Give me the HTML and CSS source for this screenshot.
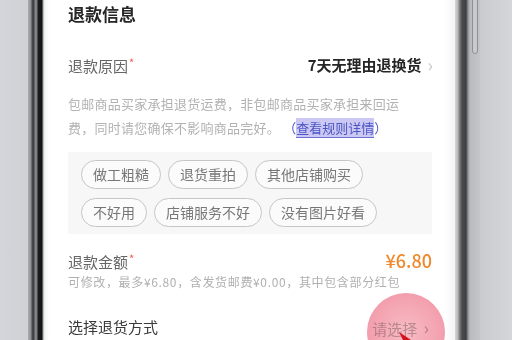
FILE: index.html
```html
<!DOCTYPE html>
<html lang="zh">
<head>
<meta charset="utf-8">
<link rel="stylesheet" href="styles.css">
</head>
<body>
<div class="scene">
  <div class="bg-left"></div>
  <div class="bezel-left"></div>
  <div class="screen">
    <div class="title">退款信息</div>
    <div class="row reason">
      <span class="label">退款原因<i class="req">*</i></span>
      <span class="value">7天无理由退换货<span class="chev">&#x203A;</span></span>
    </div>
    <p class="note">包邮商品买家承担退货运费，非包邮商品买家承担来回运<br>费，同时请您确保不影响商品完好。 <span class="link">（<u>查看规则详情</u>）</span></p>
    <div class="tags">
      <div class="tag-row">
        <span class="tag">做工粗糙</span>
        <span class="tag">退货重拍</span>
        <span class="tag">其他店铺购买</span>
      </div>
      <div class="tag-row">
        <span class="tag">不好用</span>
        <span class="tag">店铺服务不好</span>
        <span class="tag">没有图片好看</span>
      </div>
    </div>
    <div class="row amount">
      <span class="label">退款金额<i class="req">*</i></span>
      <span class="price">¥6.80</span>
    </div>
    <div class="sub">可修改，最多¥6.80，含发货邮费¥0.00，其中包含部分红包</div>
    <div class="row method">
      <span class="label dark">选择退货方式</span>
      <span class="pick">请选择 <span class="chev2">&#x203A;</span></span>
    </div>
    <div class="touch"></div>
    <svg class="pointer" width="30" height="14" viewBox="0 0 30 14"><polygon points="2,2 20,14 8,14" fill="#d8101e"/></svg>
  </div>
  <div class="bezel-right"><div class="button"></div></div>
  <div class="bg-right"></div>
</div>
</body>
</html>
```
FILE: styles.css
```css
* { box-sizing: border-box; }
html, body { margin: 0; padding: 0; }
body {
  width: 512px;
  height: 340px;
  overflow: hidden;
  font-family: "Noto Sans CJK SC", "Noto Sans", sans-serif;
  background: #d2d4d8;
}
.scene {
  display: flex;
  width: 512px;
  height: 340px;
}
.bg-left {
  width: 28px;
  background: linear-gradient(90deg, #d3d5da, #cfd1d5);
}
.bezel-left {
  width: 17px;
  background: linear-gradient(90deg,
    #a9abaf 0px, #8d8f93 3px, #4b4c4f 4px, #3a3b3d 6px, #8a8b8e 7px, #7a7b7e 9px,
    #1c1c1e 10px, #141415 14px, #9a9b9d 15px, #e6e6e6 16px, #f6f6f6 17px);
}
.screen {
  position: relative;
  width: 410px;
  padding: 0 23px;
  background: linear-gradient(90deg, #f4f4f4 0, #ffffff 4px, #ffffff 400px, #f2f2f2 410px);
  color: #333;
  overflow: hidden;
}
.bezel-right {
  position: relative;
  width: 25px;
  background: linear-gradient(90deg,
    #d8d8d8 0px, #b4b4b6 3px, #8a8a8c 4px, #4a4a4c 7px, #3e3e40 11px, #8e8f92 13px,
    #b9bbbe 15px, #c3c5c8 25px);
}
.button {
  position: absolute;
  left: 17px;
  top: -4px;
  width: 6px;
  height: 58px;
  border: 1px solid #8d8f92;
  border-radius: 3px;
  background: #c8cacd;
}
.bg-right {
  flex: 1;
  background: linear-gradient(90deg, #c9cbce, #d4d6da);
}
.title {
  margin-top: 2px;
  font-size: 17px;
  line-height: 24px;
  font-weight: 700;
  color: #262626;
}
.row {
  display: flex;
  justify-content: space-between;
  align-items: center;
  height: 24px;
}
.reason { margin-top: 26px; }
.label {
  font-size: 15px;
  color: #666;
  line-height: 24px;
}
.label.dark { color: #3a3a3a; }
.req {
  font-style: normal;
  color: #f05a4a;
  font-size: 11px;
  vertical-align: 5px;
  margin-left: 1px;
}
.value {
  font-size: 15px;
  font-weight: 700;
  color: #262626;
  display: flex;
  align-items: center;
}
.chev {
  font-weight: 400;
  color: #c8c8c8;
  font-size: 18px;
  margin-left: 6px;
  margin-right: -1px;
}
.note {
  margin: 16px 0 0;
  font-size: 13px;
  line-height: 24px;
  color: #b2b2b2;
  letter-spacing: 0.25px;
  white-space: nowrap;
}
.link { color: #4c55c4; letter-spacing: 0; }
.link u {
  text-decoration: none;
  background: #cbc8f3;
  border-bottom: 1px solid #6a6fd0;
}
.tags {
  margin-top: 12px;
  background: #f7f7f7;
  padding: 8px 13px 7px;
  display: flex;
  flex-direction: column;
  gap: 9px;
}
.tag-row {
  display: flex;
  gap: 7px;
}
.tag {
  height: 29px;
  line-height: 27px;
  padding: 0 11px;
  border: 1.5px solid #c6c6c6;
  border-radius: 15px;
  font-size: 14px;
  color: #777;
  background: #fbfbfb;
}
.amount { margin-top: 14px; }
.price {
  font-size: 18px;
  font-weight: 500;
  color: #f0892c;
}
.sub {
  margin-top: 1px;
  font-size: 12px;
  line-height: 18px;
  color: #b0b0b0;
  letter-spacing: 0.65px;
  white-space: nowrap;
}
.method { margin-top: 24px; }
.pick {
  font-size: 15px;
  color: #c0c0c0;
  margin-right: 3px;
}
.chev2 {
  font-size: 18px;
  margin-left: 3px;
}
.touch {
  position: absolute;
  left: 322px;
  top: 293px;
  width: 78px;
  height: 78px;
  border-radius: 50%;
  background: radial-gradient(circle, rgba(245,160,172,0.7) 0%, rgba(238,125,145,0.78) 80%, rgba(222,85,110,0.85) 100%);
  mix-blend-mode: multiply;
}
.pointer {
  position: absolute;
  left: 352px;
  top: 330px;
}
```
